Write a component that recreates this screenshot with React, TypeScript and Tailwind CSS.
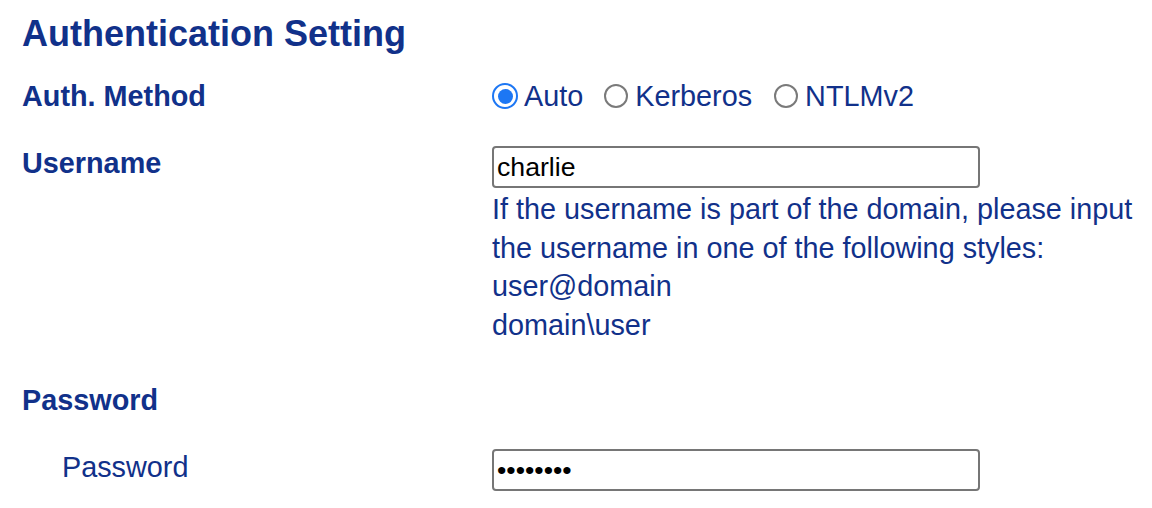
import React, { useState } from 'react';

const NAVY = 'text-[#11318a]';

type Method = 'auto' | 'kerberos' | 'ntlmv2';

const Radio: React.FC<{ checked: boolean; label: string; onClick: () => void; className?: string }> = ({ checked, label, onClick, className }) => (
  <label onClick={onClick} className={`flex items-center cursor-pointer ${className || ''}`}>
    {checked ? (
      <span className="w-[26px] h-[26px] rounded-full border-[2.5px] border-[#1d77f4] flex items-center justify-center mr-[6px]">
        <span className="w-[15px] h-[15px] rounded-full bg-[#1d77f4]" />
      </span>
    ) : (
      <span className="w-[24px] h-[24px] rounded-full border-2 border-[#7a7a7a] bg-white mr-[7px]" />
    )}
    <span>{label}</span>
  </label>
);

export default function App() {
  const [method, setMethod] = useState<Method>('auto');
  const [username, setUsername] = useState('charlie');
  const [password, setPassword] = useState('charlie1');

  return (
    <div className={`min-h-[508px] bg-white pl-[22px] pt-[13px] ${NAVY} font-['Liberation_Sans',Arial,sans-serif]`}>
      <h2 className="text-[36px] font-bold leading-[42px]">Authentication Setting</h2>

      {/* 認証方式 */}
      <div className="flex mt-[22px] text-[28.8px] leading-[38px]">
        <div className="w-[470px] font-bold">Auth. Method</div>
        <div className="flex items-center">
          <Radio checked={method === 'auto'} label="Auto" onClick={() => setMethod('auto')} />
          <Radio checked={method === 'kerberos'} label="Kerberos" onClick={() => setMethod('kerberos')} className="ml-[21px]" />
          <Radio checked={method === 'ntlmv2'} label="NTLMv2" onClick={() => setMethod('ntlmv2')} className="ml-[22px]" />
        </div>
      </div>

      <div className="flex mt-[29px] text-[28.8px]">
        <div className="w-[470px] font-bold leading-[38px]">Username</div>
        <div className="pt-[2px]">
          <input
            value={username}
            onChange={e => setUsername(e.target.value)}
            className="block w-[488px] h-[42px] border-2 border-[#767676] rounded-[4px] pl-[3px] pr-[4px] text-[26.67px] text-black outline-none font-['Liberation_Sans',Arial,sans-serif]"
          />
          <div className="mt-[2px] leading-[38.5px]">
            <p>If the username is part of the domain, please input</p>
            <p>the username in one of the following styles:</p>
            <p>user@domain</p>
            <p>domain\user</p>
          </div>
        </div>
      </div>

      <div className="mt-[37px] text-[28.8px] leading-[38px] font-bold">Password</div>

      <div className="flex mt-[29px] text-[28.8px] leading-[38px]">
        <div className="w-[470px] pl-[40px]">Password</div>
        <div className="pt-[1px]">
          <input
            type="password"
            value={password}
            onChange={e => setPassword(e.target.value)}
            className="block w-[488px] h-[42px] border-2 border-[#767676] rounded-[4px] pl-[3px] pr-[4px] text-[26.67px] text-black outline-none font-['Liberation_Sans',Arial,sans-serif]"
          />
        </div>
      </div>
    </div>
  );
}
